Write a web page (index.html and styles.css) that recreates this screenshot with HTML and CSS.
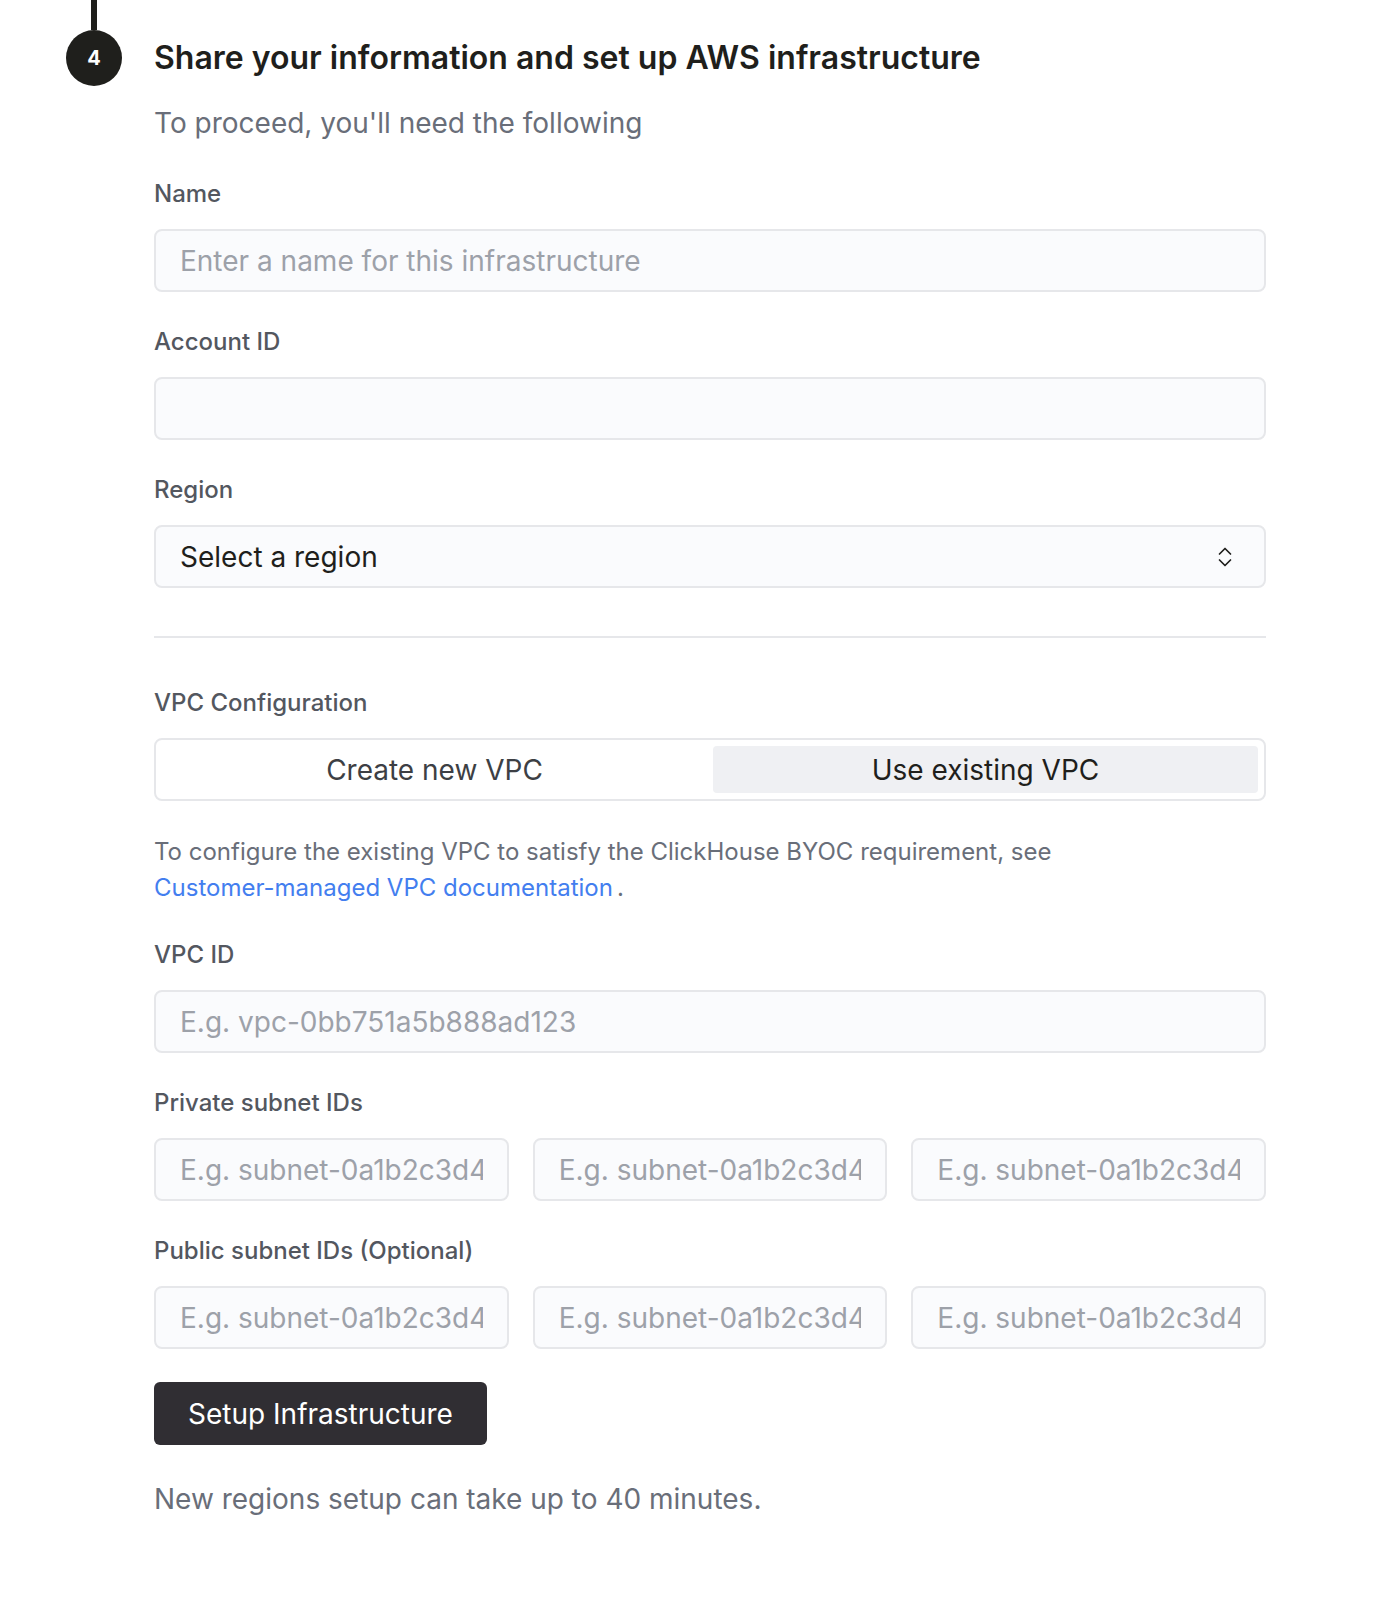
FILE: index.html
```html
<!DOCTYPE html>
<html lang="en">
<head>
<meta charset="utf-8">
<title>Setup AWS infrastructure</title>
<link rel="stylesheet" href="styles.css">
</head>
<body>
<div class="step">
  <div class="rail">
    <div class="rail-line"></div>
    <div class="badge">4</div>
  </div>
  <div class="content">
    <h2 class="title">Share your information and set up AWS infrastructure</h2>
    <p class="subtitle">To proceed, you'll need the following</p>

    <div class="field">
      <label class="label">Name</label>
      <div class="input placeholder"><span class="txt">Enter a name for this infrastructure</span></div>
    </div>
    <div class="field">
      <label class="label">Account ID</label>
      <div class="input"><span class="txt"></span></div>
    </div>
    <div class="field">
      <label class="label">Region</label>
      <div class="input select">
        <span class="txt">Select a region</span>
        <svg class="chev" width="14" height="22" viewBox="0 0 14 22" fill="none" stroke="#1f1f1c" stroke-width="1.7" stroke-linecap="round" stroke-linejoin="round"><path d="M1.5 8 L7 2.5 L12.5 8"/><path d="M1.5 14 L7 19.5 L12.5 14"/></svg>
      </div>
    </div>

    <hr class="divider">

    <div class="field vpc">
      <label class="label">VPC Configuration</label>
      <div class="segmented">
        <div class="seg">Create new VPC</div>
        <div class="seg active">Use existing VPC</div>
      </div>
    </div>

    <p class="info">To configure the existing VPC to satisfy the ClickHouse BYOC requirement, see<br><a class="link" href="#">Customer-managed VPC documentation</a>.</p>

    <div class="field">
      <label class="label">VPC ID</label>
      <div class="input placeholder"><span class="txt">E.g. vpc-0bb751a5b888ad123</span></div>
    </div>
    <div class="field">
      <label class="label">Private subnet IDs</label>
      <div class="row3">
        <div class="input placeholder"><span class="txt">E.g. subnet-0a1b2c3d4</span></div>
        <div class="input placeholder"><span class="txt">E.g. subnet-0a1b2c3d4</span></div>
        <div class="input placeholder"><span class="txt">E.g. subnet-0a1b2c3d4</span></div>
      </div>
    </div>
    <div class="field">
      <label class="label">Public subnet IDs (Optional)</label>
      <div class="row3">
        <div class="input placeholder"><span class="txt">E.g. subnet-0a1b2c3d4</span></div>
        <div class="input placeholder"><span class="txt">E.g. subnet-0a1b2c3d4</span></div>
        <div class="input placeholder"><span class="txt">E.g. subnet-0a1b2c3d4</span></div>
      </div>
    </div>

    <button class="btn">Setup Infrastructure</button>
    <p class="note">New regions setup can take up to 40 minutes.</p>
  </div>
</div>
</body>
</html>
```
FILE: styles.css
```css
* { box-sizing: border-box; }
html, body { margin: 0; padding: 0; background: #ffffff; }
body {
  font-family: Inter, "Noto Sans", sans-serif;
  color: #1f1f1c;
  width: 1392px;
  height: 1598px;
  overflow: hidden;
}
.step {
  display: flex;
  gap: 32px;
  padding-left: 66px;
}
.rail {
  width: 56px;
  display: flex;
  flex-direction: column;
  align-items: center;
}
.rail-line {
  width: 6px;
  height: 30px;
  background: #1f1f1c;
}
.badge {
  width: 56px;
  height: 56px;
  border-radius: 50%;
  background: #1f1f1c;
  color: #ffffff;
  font-weight: 700;
  font-size: 20px;
  display: flex;
  align-items: center;
  justify-content: center;
}
.content {
  width: 1112px;
  padding-top: 30px;
}
.title {
  margin: 0;
  font-size: 32px;
  font-weight: 600;
  line-height: 56px;
  color: #1f1f1c;
}
.subtitle {
  margin: 19px 0 0;
  font-size: 28px;
  line-height: 36px;
  color: #696e79;
}
.field { margin-top: 38px; }
.field + .field { margin-top: 35px; }
.label {
  display: block;
  font-size: 24px;
  line-height: 30px;
  font-weight: 500;
  color: #53575f;
  margin-bottom: 20px;
}
.input {
  height: 63px;
  min-width: 0;
  border: 2px solid #e6e7ea;
  border-radius: 8px;
  background: #fafbfd;
  padding: 0 24px;
  display: flex;
  align-items: center;
  font-size: 28px;
  color: #1f1f1c;
}
.txt {
  flex: 1;
  min-width: 0;
  overflow: hidden;
  white-space: nowrap;
}
.placeholder { color: #9da1a9; }
.select { padding-right: 32px; }
.chev { display: block; flex: none; }
.divider {
  border: 0;
  height: 2px;
  background: #e6e7ea;
  margin: 48px 0 0;
}
.field.vpc { margin-top: 50px; }
.segmented {
  height: 63px;
  border: 2px solid #e6e7ea;
  border-radius: 8px;
  background: #ffffff;
  display: grid;
  grid-template-columns: minmax(0, 1fr) minmax(0, 1fr);
  padding: 6px;
  gap: 6px;
}
.seg {
  display: flex;
  align-items: center;
  justify-content: center;
  font-size: 28px;
  color: #3d3f44;
  border-radius: 4px;
}
.seg.active { background: #eff0f3; color: #1f1f1c; }
.info {
  margin: 33px 0 0;
  font-size: 24px;
  line-height: 36px;
  color: #696e79;
}
.link { color: #437eef; text-decoration: none; margin-right: 4px; }
.info + .field { margin-top: 34px; }
.row3 {
  display: grid;
  grid-template-columns: repeat(3, minmax(0, 1fr));
  gap: 24px;
}
.btn {
  display: block;
  margin-top: 33px;
  height: 63px;
  width: 333px;
  border: 0;
  border-radius: 6px;
  background: #302e33;
  color: #ffffff;
  font-family: Inter, "Noto Sans", sans-serif;
  font-size: 28px;
  font-weight: 400;
}
.note {
  margin: 36px 0 0;
  font-size: 28px;
  line-height: 36px;
  color: #696e79;
}
```
